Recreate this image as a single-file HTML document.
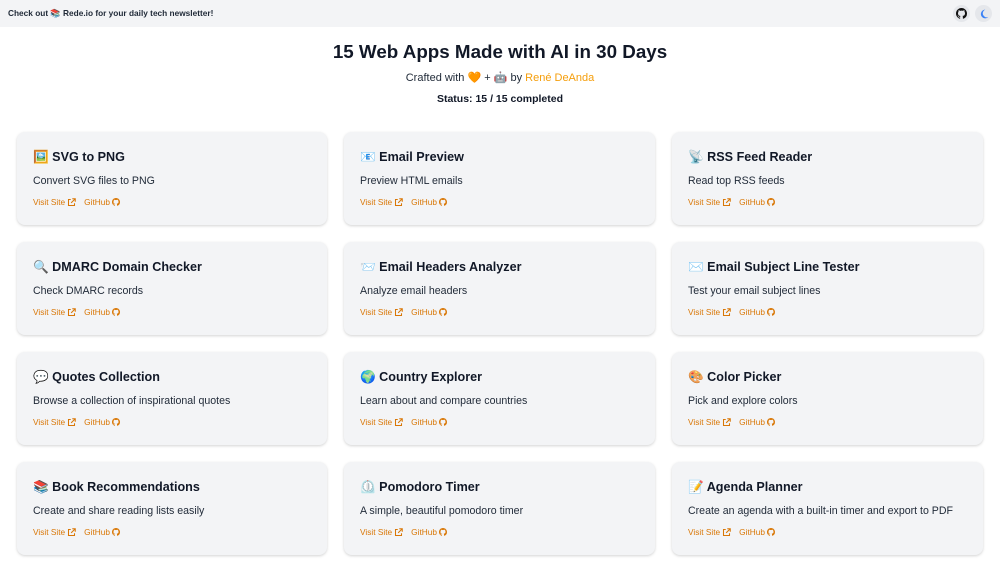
<!DOCTYPE html>
<html><head><meta charset="utf-8"><style>
*{box-sizing:border-box;margin:0;padding:0}
body{width:1000px;height:563px;overflow:hidden;background:#fff;font-family:"Liberation Sans","Noto Sans CJK SC",sans-serif;color:#111827}
.top{height:27px;background:#f3f4f6;display:flex;align-items:center;padding:0 8px;font-size:8.3px;font-weight:bold;color:#1f2937;position:relative}
.ic{position:absolute;top:5px;width:17px;height:17px;border-radius:50%;background:#e5e7eb;display:flex;align-items:center;justify-content:center}
h1{text-align:center;font-size:18.8px;font-weight:bold;margin-top:13px;line-height:24px}
.sub{text-align:center;font-size:11px;margin-top:7px;color:#1f2937}
.sub a{color:#f59e0b;text-decoration:none}
.st{text-align:center;font-size:10.5px;font-weight:bold;margin-top:9px}
.grid{position:absolute;left:17px;top:132px;display:grid;grid-template-columns:310px 311px 311px;column-gap:17px;row-gap:17px}
.card{height:93px;background:#f3f4f6;border-radius:8px;box-shadow:0 1px 3px rgba(0,0,0,.12),0 1px 2px rgba(0,0,0,.06);padding:18px 16px 0}
.card h2{font-size:12.6px;font-weight:bold;line-height:15px}
.card p{font-size:10.6px;margin-top:10px;color:#1f2937;line-height:13px}
.l{margin-top:9px;font-size:8.3px;color:#d97706;display:flex;gap:8px;align-items:center;height:10px}
.l span{display:inline-flex;align-items:center;gap:2px}
</style></head><body>
<div class="top">Check out 📚 Rede.io for your daily tech newsletter!
<div class="ic" style="left:953px"><svg width="11" height="11" viewBox="0 0 16 16"><path fill="#111" d="M8 0C3.58 0 0 3.58 0 8c0 3.54 2.29 6.53 5.47 7.59.4.07.55-.17.55-.38v-1.33c-2.23.48-2.7-1.07-2.7-1.07-.36-.92-.89-1.17-.89-1.17-.73-.5.06-.49.06-.49.8.06 1.23.83 1.23.83.72 1.23 1.87.87 2.33.67.07-.52.28-.87.5-1.07-1.78-.2-3.64-.89-3.64-3.95 0-.87.31-1.59.82-2.15-.08-.2-.36-1.02.08-2.12 0 0 .67-.21 2.2.82A7.6 7.6 0 0 1 8 3.87c.68 0 1.36.09 2 .27 1.53-1.04 2.2-.82 2.2-.82.44 1.1.16 1.92.08 2.12.51.56.82 1.27.82 2.15 0 3.07-1.87 3.75-3.65 3.95.29.25.54.73.54 1.48v2.2c0 .21.15.46.55.38A8 8 0 0 0 16 8c0-4.42-3.58-8-8-8z"/></svg></div>
<div class="ic" style="left:975px"><svg width="10" height="10" viewBox="0 0 16 16"><path fill="#3b82f6" d="M10 1a7 7 0 1 0 5 11.9A6 6 0 0 1 10 1z"/></svg></div>
</div>
<h1>15 Web Apps Made with AI in 30 Days</h1>
<div class="sub">Crafted with 🧡 + 🤖 by <a>René DeAnda</a></div>
<div class="st">Status: 15 / 15 completed</div>
<div class="grid" id="g"></div>
<script>
var d=[["🖼️","SVG to PNG","Convert SVG files to PNG"],["📧","Email Preview","Preview HTML emails"],["📡","RSS Feed Reader","Read top RSS feeds"],["🔍","DMARC Domain Checker","Check DMARC records"],["📨","Email Headers Analyzer","Analyze email headers"],["✉️","Email Subject Line Tester","Test your email subject lines"],["💬","Quotes Collection","Browse a collection of inspirational quotes"],["🌍","Country Explorer","Learn about and compare countries"],["🎨","Color Picker","Pick and explore colors"],["📚","Book Recommendations","Create and share reading lists easily"],["⏲️","Pomodoro Timer","A simple, beautiful pomodoro timer"],["📝","Agenda Planner","Create an agenda with a built-in timer and export to PDF"]];
var ext='<svg width="9" height="9" viewBox="0 0 12 12" fill="none" stroke="#d97706" stroke-width="1.4"><path d="M5 2H2v8h8V7M7 1h4v4M11 1L5.5 6.5"/></svg>';
var gh='<svg width="8" height="8" viewBox="0 0 16 16"><path fill="#d97706" d="M8 0C3.58 0 0 3.58 0 8c0 3.54 2.29 6.53 5.47 7.59.4.07.55-.17.55-.38v-1.33c-2.23.48-2.7-1.07-2.7-1.07-.36-.92-.89-1.17-.89-1.17-.73-.5.06-.49.06-.49.8.06 1.23.83 1.23.83.72 1.23 1.87.87 2.33.67.07-.52.28-.87.5-1.07-1.78-.2-3.64-.89-3.64-3.95 0-.87.31-1.59.82-2.15-.08-.2-.36-1.02.08-2.12 0 0 .67-.21 2.2.82A7.6 7.6 0 0 1 8 3.87c.68 0 1.36.09 2 .27 1.53-1.04 2.2-.82 2.2-.82.44 1.1.16 1.92.08 2.12.51.56.82 1.27.82 2.15 0 3.07-1.87 3.75-3.65 3.95.29.25.54.73.54 1.48v2.2c0 .21.15.46.55.38A8 8 0 0 0 16 8c0-4.42-3.58-8-8-8z"/></svg>';
var h='';d.forEach(function(x){h+='<div class="card"><h2>'+x[0]+' '+x[1]+'</h2><p>'+x[2]+'</p><div class="l"><span>Visit Site'+ext+'</span><span>GitHub'+gh+'</span></div></div>'});
document.getElementById('g').innerHTML=h;
</script>
</body></html>
